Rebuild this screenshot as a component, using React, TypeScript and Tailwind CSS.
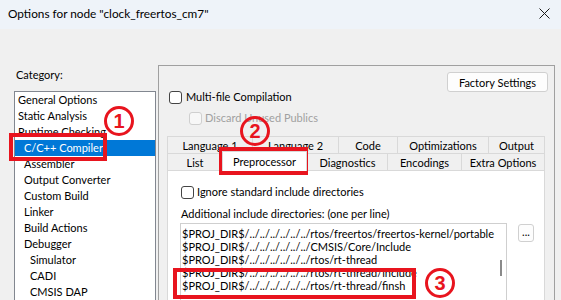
import React from "react";

const categories: { label: string; indent: number; selected?: boolean }[] = [
  { label: "General Options", indent: 3 },
  { label: "Static Analysis", indent: 3 },
  { label: "Runtime Checking", indent: 3 },
  { label: "C/C++ Compiler", indent: 9, selected: true },
  { label: "Assembler", indent: 9 },
  { label: "Output Converter", indent: 9 },
  { label: "Custom Build", indent: 9 },
  { label: "Linker", indent: 9 },
  { label: "Build Actions", indent: 9 },
  { label: "Debugger", indent: 9 },
  { label: "Simulator", indent: 15 },
  { label: "CADI", indent: 15 },
  { label: "CMSIS DAP", indent: 15 },
];

const tabsTop = [
  { label: "Language 1", w: "w-[85px]" },
  { label: "Language 2", w: "w-[86px]" },
  { label: "Code", w: "w-[59px]" },
  { label: "Optimizations", w: "w-[91px]" },
  { label: "Output", w: "w-[57px]" },
];

const tabsBottom = [
  { label: "List", w: "w-[55px]" },
  { label: "Preprocessor", w: "w-[85px]", selected: true },
  { label: "Diagnostics", w: "w-[80px]" },
  { label: "Encodings", w: "w-[74px]" },
  { label: "Extra Options", w: "w-[84px]" },
];

const includeDirs = [
  "$PROJ_DIR$/../../../../../../rtos/freertos/freertos-kernel/portable",
  "$PROJ_DIR$/../../../../../../CMSIS/Core/Include",
  "$PROJ_DIR$/../../../../../../rtos/rt-thread",
  "$PROJ_DIR$/../../../../../../rtos/rt-thread/include",
  "$PROJ_DIR$/../../../../../../rtos/rt-thread/finsh",
];

function Checkbox({ disabled = false }: { disabled?: boolean }) {
  return (
    <div
      className={`w-[13px] h-[13px] rounded-[3px] border shrink-0 ${
        disabled ? "border-[#cfcfcf] bg-[#f7f7f7]" : "border-[#444] bg-white"
      }`}
    />
  );
}

function Marker({ n, className }: { n: string; className: string }) {
  return (
    <div
      className={`absolute w-[30px] h-[30px] rounded-full border-[3px] border-[#e8141e] flex items-center justify-center text-[#e8141e] text-[20px] font-bold leading-none font-['Liberation_Sans',sans-serif] ${className}`}
    >
      {n}
    </div>
  );
}

export default function App() {
  return (
    <div className="relative w-[561px] h-[300px] overflow-hidden bg-[#f0f0f0] text-black text-[11px] font-['Lato','Liberation_Sans',sans-serif]">
      {/* title bar */}
      <div className="h-[29px] bg-[#eef3f9] flex items-center justify-between pl-[8px] pr-[11px]">
        <span className="text-[11.8px] pb-[1px]">Options for node "clock_freertos_cm7"</span>
        <svg width="11" height="11" viewBox="0 0 11 11" className="mb-[2px]">
          <path d="M0.5 0.5 L10.5 10.5 M10.5 0.5 L0.5 10.5" stroke="#1a1a1a" strokeWidth="1" />
        </svg>
      </div>

      <div className="flex">
        {/* category column */}
        <div className="w-[158px] shrink-0 pl-[14px]">
          <div className="mt-[38px] pl-[2px] leading-[16px]">Category:</div>
          <div className="mt-[8px] w-[142px] h-[230px] border border-[#828790] bg-white">
            {categories.map((c) => (
              <div
                key={c.label}
                className={`h-[16px] leading-[16px] whitespace-nowrap ${
                  c.selected ? "bg-[#0078d7] text-white" : ""
                }`}
                style={{ paddingLeft: c.indent }}
              >
                {c.label}
              </div>
            ))}
          </div>
        </div>

        {/* options panel */}
        <div className="mt-[36px] w-[397px] h-[260px] border border-[#a0a0a0] flex flex-col">
          <div className="flex justify-end pr-[6px] pt-[6px]">
            <button className="w-[101px] h-[20px] rounded-[3px] border border-[#d0d0d0] bg-[#fdfdfd] leading-none">
              Factory Settings
            </button>
          </div>

          <div className="-mt-[3px] h-[16px] flex items-center gap-[4px] pl-[10px]">
            <Checkbox />
            <span>Multi-file Compilation</span>
          </div>
          <div className="mt-[5px] h-[16px] flex items-center gap-[3px] pl-[30px] text-[#a0a0a0]">
            <Checkbox disabled />
            <span>Discard Unused Publics</span>
          </div>

          {/* tabs */}
          <div className="mt-[10px] ml-[8px] w-[378px]">
            <div className="flex h-[17px]">
              {tabsTop.map((t, i) => (
                <div
                  key={t.label}
                  className={`${t.w} h-full border-t border-l border-[#d9d9d9] flex items-center justify-center leading-none ${
                    i === tabsTop.length - 1 ? "border-r" : ""
                  }`}
                >
                  {t.label}
                </div>
              ))}
            </div>
            <div className="flex h-[17px] items-end">
              {tabsBottom.map((t, i) => (
                <div
                  key={t.label}
                  className={`${t.w} flex items-center justify-center leading-none border-t border-l border-[#d9d9d9] ${
                    i === tabsBottom.length - 1 ? "border-r" : ""
                  } ${t.selected ? "relative z-10 h-[20px] -mb-px bg-white border-r" : "h-full"}`}
                >
                  {t.label}
                </div>
              ))}
            </div>

            {/* tab page */}
            <div className="h-[140px] border border-[#d9d9d9] bg-white pl-[12px]">
              <div className="mt-[13px] h-[16px] flex items-center gap-[3px] pl-[1px]">
                <Checkbox />
                <span>Ignore standard include directories</span>
              </div>
              <div className="mt-[6px] pl-[1px] leading-[16px]">Additional include directories: (one per line)</div>
              <div className="mt-[1px] flex items-start">
                <div className="relative w-[327px] h-[80px] border border-[#cfcfcf] bg-white pt-[3px] pl-[1px] overflow-hidden">
                  {includeDirs.map((d) => (
                    <div key={d} className="h-[13px] leading-[13px] whitespace-nowrap">
                      {d}
                    </div>
                  ))}
                  <div className="absolute right-[4px] top-[36px] w-[2px] h-[16px] bg-[#8a8a8a]" />
                </div>
                <button className="ml-[11px] mt-[1px] w-[16px] h-[18px] rounded-[3px] border border-[#d0d0d0] bg-[#fdfdfd] text-[11px] leading-none pb-[4px]">
                  ...
                </button>
              </div>
            </div>
          </div>
        </div>
      </div>

      {/* annotations */}
      <div className="absolute left-[9px] top-[133px] w-[98px] h-[28px] border-4 border-[#e8141e]" />
      <div className="absolute left-[219px] top-[147px] w-[89px] h-[28px] border-4 border-[#e8141e]" />
      <div className="absolute left-[173px] top-[268px] w-[243px] h-[31px] border-4 border-[#e8141e]" />
      <Marker n="1" className="left-[104px] top-[106px]" />
      <Marker n="2" className="left-[240px] top-[116px]" />
      <Marker n="3" className="left-[425px] top-[268px]" />
    </div>
  );
}
